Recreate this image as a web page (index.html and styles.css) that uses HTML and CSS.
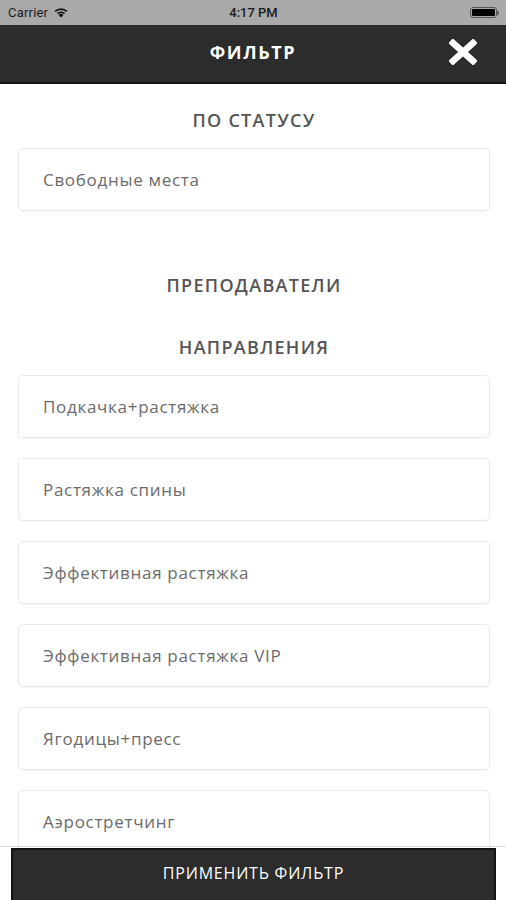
FILE: index.html
```html
<!DOCTYPE html>
<html lang="ru">
<head>
<meta charset="utf-8">
<link rel="stylesheet" href="styles.css">
</head>
<body>
<div class="screen">
  <div class="status">
    <div class="status-left">
      <span>Carrier</span>
      <svg class="wifi" width="16" height="12" viewBox="0 0 16 12">
        <path d="M8 11.5 L5.6 8.9 A3.4 3.4 0 0 1 10.4 8.9 Z" fill="#111"/>
        <path d="M3.9 7.1 A5.9 5.9 0 0 1 12.1 7.1 L10.9 8.3 A4.2 4.2 0 0 0 5.1 8.3 Z" fill="#111"/>
        <path d="M1.6 4.8 A9.2 9.2 0 0 1 14.4 4.8 L13.2 6 A7.5 7.5 0 0 0 2.8 6 Z" fill="#111"/>
      </svg>
    </div>
    <div class="status-time">4:17 PM</div>
    <div class="status-right">
      <div class="battery"><div class="battery-fill"></div></div>
      <div class="battery-tip"></div>
    </div>
  </div>
  <div class="nav">
    <div class="nav-title">ФИЛЬТР</div>
    <svg class="close" width="28" height="26" viewBox="0 0 28 26">
      <path d="M4 4 L24 22 M24 4 L4 22" stroke="#fff" stroke-width="6.5" stroke-linecap="square"/>
    </svg>
  </div>
  <div class="content">
    <h2 class="section-title">ПО СТАТУСУ</h2>
    <div class="card">Свободные места</div>
    <h2 class="section-title gap-top">ПРЕПОДАВАТЕЛИ</h2>
    <h2 class="section-title">НАПРАВЛЕНИЯ</h2>
    <div class="card-list">
      <div class="card">Подкачка+растяжка</div>
      <div class="card">Растяжка спины</div>
      <div class="card">Эффективная растяжка</div>
      <div class="card">Эффективная растяжка VIP</div>
      <div class="card">Ягодицы+пресс</div>
      <div class="card">Аэростретчинг</div>
    </div>
  </div>
  <div class="footer">
    <button class="apply">ПРИМЕНИТЬ ФИЛЬТР</button>
  </div>
</div>
</body>
</html>
```
FILE: styles.css
```css
* { box-sizing: border-box; }
html, body { margin: 0; padding: 0; }
body {
  font-family: "Open Sans", "Noto Sans", "Liberation Sans", sans-serif;
  background: #fff;
}
.screen {
  width: 506px;
  height: 900px;
  display: flex;
  flex-direction: column;
  overflow: hidden;
}
.status {
  height: 25px;
  background: #a9a9a9;
  display: grid;
  grid-template-columns: 1fr auto 1fr;
  align-items: center;
  padding: 0 7px 0 8px;
  font-family: Roboto, "Liberation Sans", sans-serif;
  font-size: 13px;
  color: #1a1a1a;
}
.status-left { display: flex; align-items: center; gap: 5px; letter-spacing: 0.2px; }
.wifi { margin-top: -1px; }
.status-time { font-weight: 500; font-size: 13px; }
.status-right { display: flex; justify-content: flex-end; align-items: center; }
.battery {
  width: 27px; height: 11px;
  border: 1px solid #555;
  border-radius: 3px;
  padding: 1px;
}
.battery-fill { width: 100%; height: 100%; background: #000; border-radius: 1px; }
.battery-tip { width: 2px; height: 4px; background: #666; border-radius: 0 1px 1px 0; }
.nav {
  height: 59px;
  background: #2c2c2c;
  border-bottom: 2px solid #111;
  display: flex;
  align-items: center;
  justify-content: center;
  position: relative;
}
.nav-title {
  color: #fff;
  font-weight: 700;
  font-size: 18px;
  letter-spacing: 1.6px;
  margin-top: -4px;
}
.close {
  position: absolute;
  right: 29px;
  top: 14px;
}
.content {
  flex: 1;
  overflow: hidden;
  padding: 0 16px 0 18px;
  display: flex;
  flex-direction: column;
}
.section-title {
  margin: 0;
  text-align: center;
  font-size: 18px;
  font-weight: 600;
  color: #555;
  letter-spacing: 1.3px;
  line-height: 20px;
}
.content > .section-title:first-child { margin-top: 26px; margin-bottom: 18px; }
.gap-top { margin-top: 64px !important; margin-bottom: 42px; }
.card {
  height: 63px;
  flex-shrink: 0;
  border: 1px solid #e8e8e8;
  border-radius: 5px;
  box-shadow: 0 1px 1px rgba(0,0,0,0.04);
  display: flex;
  align-items: center;
  padding-left: 24px;
  font-size: 17px;
  color: #6b6b6b;
  letter-spacing: 0.7px;
}
.card-list {
  margin-top: 18px;
  display: flex;
  flex-direction: column;
  gap: 20px;
}
.footer {
  height: 54px;
  flex-shrink: 0;
  border-top: 1px solid #dcdcdc;
  background: #fff;
  padding: 1px 10px 0 11px;
}
.apply {
  width: 100%;
  height: 100%;
  background: #2c2c2c;
  border: 2px solid #121212;
  border-bottom: none;
  color: #fff;
  font-family: "Open Sans", "Noto Sans", sans-serif;
  font-size: 16px;
  font-weight: 500;
  letter-spacing: 0.8px;
  padding: 0 0 4px;
}
```
